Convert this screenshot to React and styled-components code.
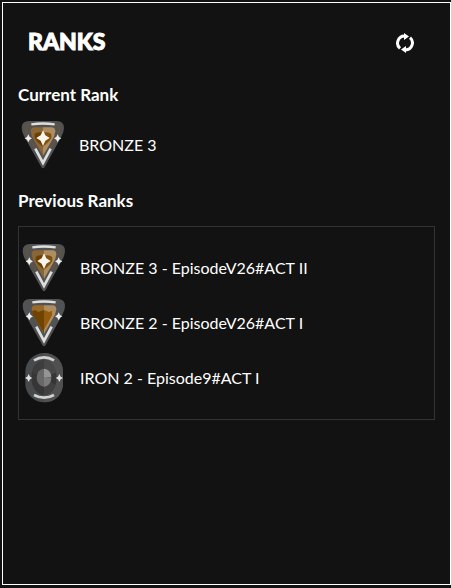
import styled, { createGlobalStyle } from 'styled-components';

const GlobalStyle = createGlobalStyle`
  * {
    box-sizing: border-box;
  }

  body {
    margin: 0;
    background-color: #121212;
    color: #ffffff;
    font-family: Lato, "Open Sans", sans-serif;
  }
`;

const previousRanks = [
  { tier: 'bronze', level: 3, name: 'BRONZE 3', act: 'EpisodeV26#ACT II' },
  { tier: 'bronze', level: 2, name: 'BRONZE 2', act: 'EpisodeV26#ACT I' },
  { tier: 'iron', level: 2, name: 'IRON 2', act: 'Episode9#ACT I' },
];

const BronzeBadge = ({ level }) => (
  <Badge viewBox="0 0 150 150" aria-hidden="true">
    <path d="M11 24Q11 3 33 3H116Q138 3 138 24Q138 36 130 50L80 141Q75 149 70 141L19 50Q11 36 11 24Z" fill="#505254" />
    {level === 3 && (
      <path d="M40 12H109Q127 12 125 30L119 49L75 122L30 49L24 30Q22 12 40 12Z" fill="none" stroke="#7a5420" strokeWidth="3" />
    )}
    <path d="M75 22H50Q38 22 38 34L42 50L75 107Z" fill={level === 3 ? '#8a6535' : '#9a6a28'} />
    <path d="M75 22H100Q112 22 112 34L108 50L75 107Z" fill="#b08d5e" />
    {level === 3 ? (
      <>
        <path d="M50 42Q58 34 75 38V80Q56 66 50 54Z" fill="#6b4100" />
        <path d="M100 42Q92 34 75 38V80Q94 66 100 54Z" fill="#80500c" />
      </>
    ) : (
      <>
        <path d="M39 40Q50 32 57 42L75 36V105L42 52Z" fill="#704400" />
        <path d="M75 36L90 42L99 38V52L75 96Z" fill="#935c0c" />
      </>
    )}
    <path d="M40 13Q75 8 110 13" fill="none" stroke="#dedede" strokeWidth="7" />
    <path d="M52 86L75 129L98 86" fill="none" stroke="#dedede" strokeWidth="8" />
    <path d="M31 43L35 51L42 55L35 59L31 67L27 59L20 55L27 51ZM119 43L123 51L130 55L123 59L119 67L115 59L108 55L115 51Z" fill="#eeeeee" />
    {level === 3 && <path d="M75 31L82 46L95 54L82 62L75 78L68 62L55 54L68 46Z" fill="#f7f4ee" />}
  </Badge>
);

const IronBadge = () => (
  <Badge viewBox="0 0 150 150" aria-hidden="true">
    <rect x="19" y="0" width="113" height="148" rx="56" fill="#474b4d" />
    <path d="M75 0Q124 2 132 50V98Q124 146 75 148Z" fill="#505050" />
    <ellipse cx="75" cy="74" rx="38" ry="52" fill="#363636" />
    <path d="M75 22Q103 24 112 58L75 74Z" fill="#484848" />
    <path d="M75 22Q47 24 38 58L75 74Z" fill="#3d3d3d" />
    <path d="M75 74L110 96Q98 125 75 126Z" fill="#404040" />
    <ellipse cx="75" cy="74" rx="22" ry="27" fill="#686868" />
    <path d="M75 47Q94 49 97 71L75 74Z" fill="#959595" />
    <path d="M75 74L97 76Q94 99 75 101Z" fill="#7c7c7c" />
    <path d="M45 22Q75 4 105 22M45 126Q75 142 105 126" fill="none" stroke="#d2d2d2" strokeWidth="8" />
    <path d="M29 63L33 71L40 75L33 79L29 87L25 79L18 75L25 71ZM121 63L125 71L132 75L125 79L121 87L117 79L110 75L117 71Z" fill="#e0e0e0" />
  </Badge>
);

const RankBadge = ({ tier, level }) => (tier === 'iron' ? <IronBadge /> : <BronzeBadge level={level} />);

const App = () => {
  return (
    <>
      <GlobalStyle />
      <Panel>
        <Header>
          <Title>RANKS</Title>
          <RefreshButton type="button" aria-label="Refresh ranks">
            <svg viewBox="0 0 20 20" width="20" height="20" aria-hidden="true">
              <path d="M5 15.4A7 7 0 0 1 9.5 3.1M15 4.6A7 7 0 0 1 10.5 16.9" fill="none" stroke="#ffffff" strokeWidth="3" />
              <path d="M9 0L14 3.5L9 7ZM11 13L6 16.5L11 20Z" fill="#ffffff" />
            </svg>
          </RefreshButton>
        </Header>
        <Heading>Current Rank</Heading>
        <Rank>
          <RankBadge tier="bronze" level={3} />
          <span>BRONZE 3</span>
        </Rank>
        <Heading>Previous Ranks</Heading>
        <RankList>
          {previousRanks.map((rank) => (
            <Rank as="li" key={rank.name}>
              <RankBadge tier={rank.tier} level={rank.level} />
              <span>{rank.name} - {rank.act}</span>
            </Rank>
          ))}
        </RankList>
      </Panel>
    </>
  );
};

const Panel = styled.main`
  min-height: calc(100vh - 5px);
  margin: 2px 0 3px 2px;
  padding: 15px;
  border: 1px solid #ffffff;
`;

const Header = styled.header`
  display: flex;
  align-items: center;
  justify-content: space-between;
  height: 46px;
  padding: 0 20px 0 10px;
`;

const Title = styled.h1`
  margin: 0;
  font-size: 23px;
  line-height: 28px;
  font-weight: 900;
  -webkit-text-stroke: 1px #ffffff;
`;

const RefreshButton = styled.button`
  display: flex;
  margin-top: 4px;
  padding: 0;
  border: none;
  background: none;
  cursor: pointer;
`;

const Heading = styled.h2`
  margin: 21px 0 15px;
  font-size: 17px;
  line-height: 20px;
  font-weight: 700;
`;

const Rank = styled.div`
  display: flex;
  align-items: center;
  gap: 11px;
  font-size: 16px;
  line-height: 20px;
`;

const RankList = styled.ul`
  display: flex;
  flex-direction: column;
  gap: 5px;
  margin: 0;
  padding: 16px 0;
  border: 1px solid #333333;
  list-style: none;
`;

const Badge = styled.svg`
  flex: none;
  width: 50px;
  height: 50px;
`;

export default App;
